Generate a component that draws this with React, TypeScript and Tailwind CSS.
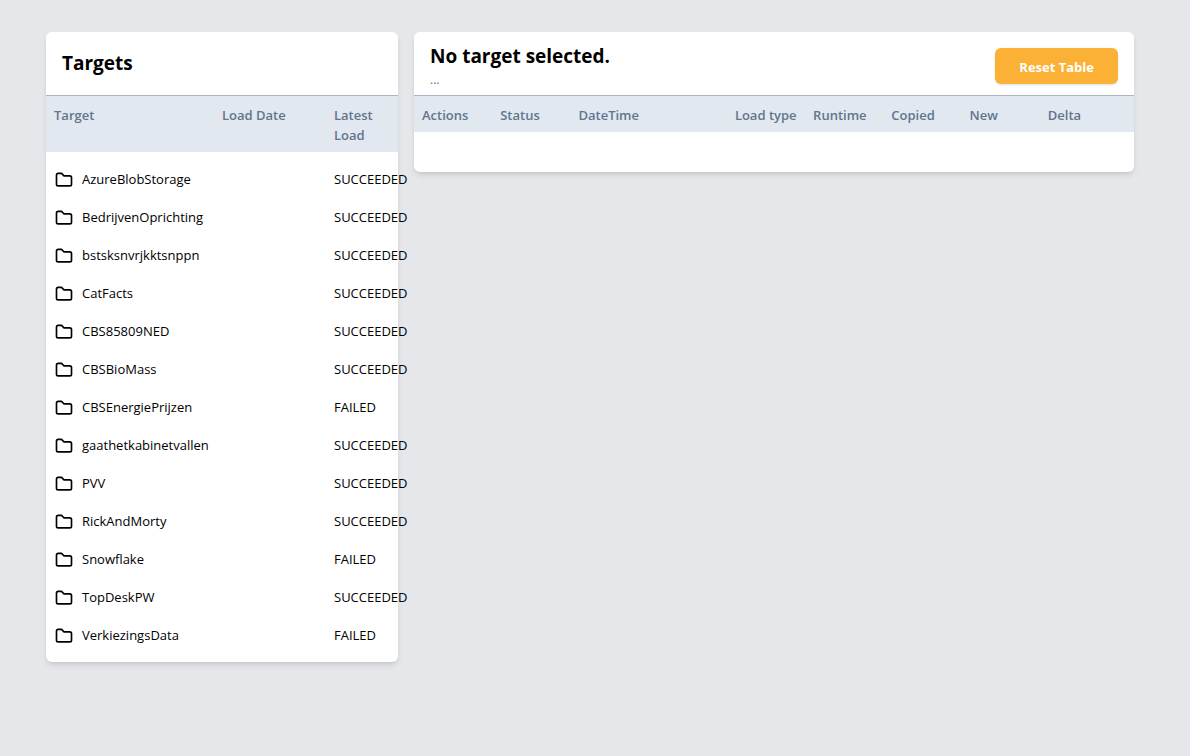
import { TbFolder } from "react-icons/tb";

interface Target {
  name: string;
  loadDate?: string;
  latestLoad: "SUCCEEDED" | "FAILED";
}

const targets: Target[] = [
  { name: "AzureBlobStorage", latestLoad: "SUCCEEDED" },
  { name: "BedrijvenOprichting", latestLoad: "SUCCEEDED" },
  { name: "bstsksnvrjkktsnppn", latestLoad: "SUCCEEDED" },
  { name: "CatFacts", latestLoad: "SUCCEEDED" },
  { name: "CBS85809NED", latestLoad: "SUCCEEDED" },
  { name: "CBSBioMass", latestLoad: "SUCCEEDED" },
  { name: "CBSEnergiePrijzen", latestLoad: "FAILED" },
  { name: "gaathetkabinetvallen", latestLoad: "SUCCEEDED" },
  { name: "PVV", latestLoad: "SUCCEEDED" },
  { name: "RickAndMorty", latestLoad: "SUCCEEDED" },
  { name: "Snowflake", latestLoad: "FAILED" },
  { name: "TopDeskPW", latestLoad: "SUCCEEDED" },
  { name: "VerkiezingsData", latestLoad: "FAILED" },
];

const columns = [
  { label: "Actions" },
  { label: "Status" },
  { label: "DateTime", wide: true },
  { label: "Load type" },
  { label: "Runtime" },
  { label: "Copied" },
  { label: "New" },
  { label: "Delta" },
];

function TargetList() {
  return (
    <section className="rounded-md bg-white shadow-md">
      <div className="flex h-16 items-center border-b border-[#adb5c3] px-4 pb-0.5">
        <h2 className="text-[19px] leading-7 font-bold">Targets</h2>
      </div>
      <table className="block">
        <thead className="block bg-[#e1e8f0] text-slate-500">
          <tr className="grid grid-cols-6 px-2 pt-[9px] pb-[7px] text-left">
            <th className="col-span-3 font-semibold">Target</th>
            <th className="col-span-2 font-semibold">Load Date</th>
            <th className="font-semibold">Latest Load</th>
          </tr>
        </thead>
        <tbody className="block py-2">
          {targets.map((target) => (
            <tr key={target.name} className="grid h-[38px] cursor-pointer grid-cols-6 items-center px-2">
              <td className="col-span-3 flex items-center gap-2">
                <TbFolder size={20} className="mt-0.5" />
                {target.name}
              </td>
              <td className="col-span-2">{target.loadDate}</td>
              <td>{target.latestLoad}</td>
            </tr>
          ))}
        </tbody>
      </table>
    </section>
  );
}

function TargetDetails() {
  return (
    <section className="col-span-2 rounded-md bg-white shadow-md">
      <div className="flex h-16 items-center justify-between border-b border-[#adb5c3] px-4 pt-1">
        <div>
          <h2 className="text-[19px] leading-7 font-bold">No target selected.</h2>
          <p className="text-xs leading-5 text-gray-500">...</p>
        </div>
        <button type="button" className="h-9 rounded-md bg-[#fab135] px-6 pt-0.5 font-bold text-white shadow-sm">
          Reset Table
        </button>
      </div>
      <table className="block">
        <thead className="block bg-[#e1e8f0] text-slate-500">
          <tr className="grid grid-cols-9 px-2 pt-[9px] pb-[7px] text-left">
            {columns.map((column) => (
              <th key={column.label} className={`font-semibold whitespace-nowrap ${column.wide ? "col-span-2" : ""}`}>
                {column.label}
              </th>
            ))}
          </tr>
        </thead>
        <tbody className="block h-10" />
      </table>
    </section>
  );
}

export default function App() {
  return (
    <main className="min-h-screen bg-gray-200 py-8 pr-14 pl-[46px] font-['Open_Sans','Noto_Sans',sans-serif] text-[13px] leading-5 text-black">
      <div className="grid grid-cols-3 items-start gap-4">
        <TargetList />
        <TargetDetails />
      </div>
    </main>
  );
}
